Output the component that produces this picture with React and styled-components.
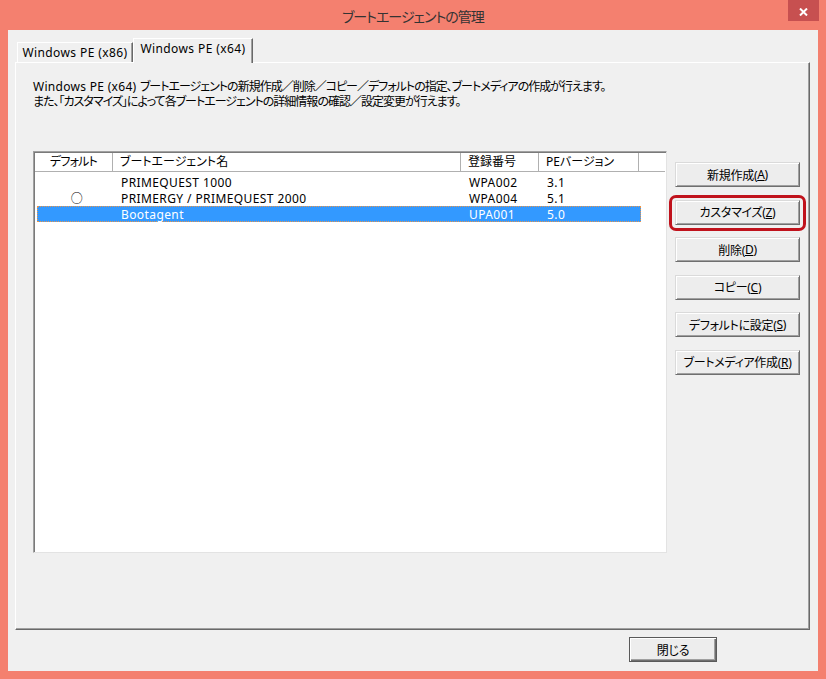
import React from "react";
import styled, { createGlobalStyle, css } from "styled-components";

const GlobalStyle = createGlobalStyle`
  html, body { margin: 0; padding: 0; }
  body {
    width: 826px;
    height: 679px;
    overflow: hidden;
    font-family: "Noto Sans", "Noto Sans CJK JP", sans-serif;
    font-size: 12px;
    color: #000;
  }
  * { box-sizing: border-box; }
`;

const Window = styled.div`
  width: 826px;
  height: 679px;
  background: #f4806f;
  display: flex;
  flex-direction: column;
`;

const TitleBar = styled.div`
  height: 30px;
  display: grid;
  grid-template-columns: 1fr auto 1fr;
  align-items: start;
`;

const Title = styled.div`
  grid-column: 2;
  line-height: 30px;
  padding-top: 1px;
  font-size: 14px;
  letter-spacing: -1px;
  color: #333;
  font-feature-settings: "palt";
  font-family: "Noto Sans CJK JP", sans-serif;
`;

const CloseBox = styled.div`
  grid-column: 3;
  justify-self: end;
  margin-right: 7px;
  width: 31px;
  height: 21px;
  background: #c75050;
  display: flex;
  align-items: center;
  justify-content: center;
  padding-top: 2px;
`;

const Client = styled.div`
  flex: 1;
  margin: 0 8px 8px;
  background: #f0f0f0;
  display: flex;
  flex-direction: column;
  padding: 8px 8px 0 7px;
`;

const TabStrip = styled.div`
  display: flex;
  align-items: flex-end;
  height: 24px;
  padding-left: 2px;
  position: relative;
  z-index: 1;
`;

const Tab = styled.div`
  width: ${(p) => (p.$active ? 120 : 116)}px;
  height: ${(p) => (p.$active ? 25 : 20)}px;
  margin-bottom: ${(p) => (p.$active ? -1 : 0)}px;
  background: #f0f0f0;
  border: 1px solid;
  border-color: #fff #696969 transparent #fff;
  border-bottom: none;
  box-shadow: inset -1px 0 #a0a0a0;
  text-align: center;
  line-height: 15px;
  padding-top: 2px;
  letter-spacing: 0.4px;
  white-space: nowrap;
`;

const Panel = styled.div`
  height: 568px;
  border: 1px solid;
  border-color: #fff #696969 #696969 #fff;
  box-shadow: inset -1px -1px #a0a0a0;
  padding: 16px 0 0 17px;
`;

const Description = styled.p`
  margin: 0;
  line-height: 15px;
  font-feature-settings: "palt";
  letter-spacing: -1px;
  white-space: nowrap;
`;

const Latin = styled.span`
  letter-spacing: 0.3px;
`;

const ContentRow = styled.div`
  display: flex;
  align-items: flex-start;
  gap: 8px;
  margin-top: 42px;
`;

const ListView = styled.div`
  width: 634px;
  height: 402px;
  background: #fff;
  border: 1px solid;
  border-color: #a0a0a0 #e3e3e3 #e3e3e3 #a0a0a0;
  padding: 1px;
  box-shadow: inset 1px 1px #7a7a7a;
`;

const cols = "78px 348px 78px 100px 1fr";

const Header = styled.div`
  display: grid;
  grid-template-columns: ${cols};
  height: 19px;
`;

const HeaderCell = styled.div`
  border-bottom: 1px solid #b0b0b0;
  border-right: ${(p) => (p.$last ? "none" : "1px solid #b0b0b0")};
  background: #fff;
  line-height: 18px;
  padding-left: ${(p) => (p.$center ? 0 : 7)}px;
  text-align: ${(p) => (p.$center ? "center" : "left")};
  font-feature-settings: "palt";
  letter-spacing: ${(p) => (p.$center ? -0.8 : 0)}px;
  white-space: nowrap;
`;

const Rows = styled.div`
  padding-top: 2px;
`;

const Row = styled.div`
  display: grid;
  grid-template-columns: 78px 348px 78px 100px;
  width: 604px;
  height: 16px;
  margin-left: 2px;
  line-height: 15px;
  letter-spacing: 0.4px;
  border: 1px solid transparent;
  ${(p) =>
    p.$selected &&
    css`
      background: #3399ff;
      color: #fff;
      border: 1px dotted #e8954a;
    `}
`;

const Cell = styled.div`
  padding-left: ${(p) => (p.$center ? 0 : 5)}px;
  text-align: ${(p) => (p.$center ? "center" : "left")};
  white-space: nowrap;
`;

const ButtonColumn = styled.div`
  display: flex;
  flex-direction: column;
  gap: 12.5px;
  padding-top: 11px;
`;

const Button = styled.div`
  position: relative;
  width: ${(p) => p.$w || 125}px;
  height: 25px;
  background: #ededed;
  border: 1px solid;
  border-color: ${(p) =>
    p.$default ? "#5a5a5a" : "#dadada #6f6f6f #6f6f6f #dadada"};
  box-shadow: ${(p) =>
    p.$default
      ? "inset 1px 1px #fff, inset -1px -1px #6f6f6f, inset -2px -2px #a0a0a0"
      : "inset 1px 1px #fff, inset -1px -1px #a0a0a0"};
  display: flex;
  align-items: center;
  justify-content: center;
  font-feature-settings: "palt";
  letter-spacing: -0.3px;
  white-space: nowrap;
  ${(p) =>
    p.$marked &&
    css`
      &::after {
        content: "";
        position: absolute;
        top: -6px;
        bottom: -7px;
        left: -7px;
        right: -7px;
        border: 3px solid #c0121c;
        border-radius: 7px;
      }
    `}
`;

const Footer = styled.div`
  display: flex;
  justify-content: flex-end;
  padding: 7px 93px 0 0;
`;

const Key = styled.span`
  text-decoration: underline;
`;

const rows = [
  { def: "", name: "PRIMEQUEST 1000", no: "WPA002", ver: "3.1" },
  { def: "○", name: "PRIMERGY / PRIMEQUEST 2000", no: "WPA004", ver: "5.1" },
  { def: "", name: "Bootagent", no: "UPA001", ver: "5.0", selected: true },
];

const buttons = [
  ["新規作成", "A"],
  ["カスタマイズ", "Z", true],
  ["削除", "D"],
  ["コピー", "C"],
  ["デフォルトに設定", "S"],
  ["ブートメディア作成", "R"],
];

export default function App() {
  return (
    <>
      <GlobalStyle />
      <Window>
        <TitleBar>
          <Title>ブートエージェントの管理</Title>
          <CloseBox>
            <svg width="9" height="8" viewBox="0 0 9 8">
              <path d="M1 0.5 L8 7.5 M8 0.5 L1 7.5" stroke="#fff" strokeWidth="2" />
            </svg>
          </CloseBox>
        </TitleBar>
        <Client>
          <TabStrip>
            <Tab>Windows PE (x86)</Tab>
            <Tab $active>Windows PE (x64)</Tab>
          </TabStrip>
          <Panel>
            <Description>
              <Latin>Windows PE (x64) </Latin>
              ブートエージェントの新規作成／削除／コピー／デフォルトの指定、ブートメディアの作成が行えます。
            </Description>
            <Description>
              また、「カスタマイズ」によって各ブートエージェントの詳細情報の確認／設定変更が行えます。
            </Description>
            <ContentRow>
              <ListView>
                <Header>
                  <HeaderCell $center>デフォルト</HeaderCell>
                  <HeaderCell>ブートエージェント名</HeaderCell>
                  <HeaderCell>登録番号</HeaderCell>
                  <HeaderCell>PEバージョン</HeaderCell>
                  <HeaderCell $last />
                </Header>
                <Rows>
                  {rows.map((r) => (
                    <Row key={r.name} $selected={r.selected}>
                      <Cell $center>{r.def}</Cell>
                      <Cell>{r.name}</Cell>
                      <Cell>{r.no}</Cell>
                      <Cell>{r.ver}</Cell>
                    </Row>
                  ))}
                </Rows>
              </ListView>
              <ButtonColumn>
                {buttons.map(([label, key, marked]) => (
                  <Button key={label} $marked={marked}>
                    {label}(<Key>{key}</Key>)
                  </Button>
                ))}
              </ButtonColumn>
            </ContentRow>
          </Panel>
          <Footer>
            <Button $w={88} $default>
              閉じる
            </Button>
          </Footer>
        </Client>
      </Window>
    </>
  );
}
